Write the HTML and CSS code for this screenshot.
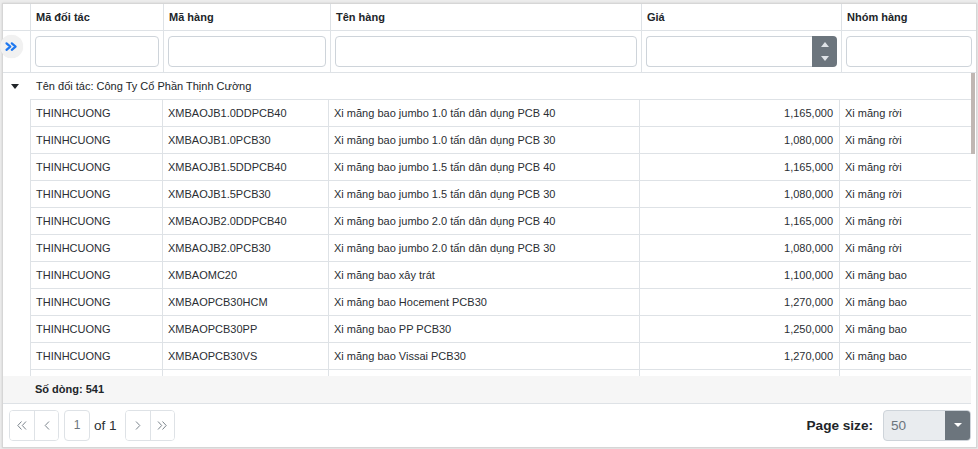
FILE: index.html
```html
<!DOCTYPE html>
<html lang="vi">
<head>
<meta charset="utf-8">
<title>Bảng giá</title>
<link rel="stylesheet" href="styles.css">
</head>
<body>
<div class="grid">
  <div class="head-row">
    <div class="hc"></div>
    <div class="hc">Mã đối tác</div>
    <div class="hc">Mã hàng</div>
    <div class="hc">Tên hàng</div>
    <div class="hc">Giá</div>
    <div class="hc">Nhóm hàng</div>
  </div>
  <div class="filter-row">
    <div class="fc"></div>
    <div class="fc"><input class="finput" type="text"></div>
    <div class="fc"><input class="finput" type="text"></div>
    <div class="fc"><input class="finput" type="text"></div>
    <div class="fc">
      <div class="numbox">
        <input class="finput numinput" type="text">
        <div class="spin"><span class="up"></span><span class="down"></span></div>
      </div>
    </div>
    <div class="fc"><input class="finput" type="text"></div>
  </div>
  <button class="expand" type="button" aria-label="Mở rộng">
    <svg width="23" height="23" viewBox="0 0 23 23"><path d="M6.5 8.3 L10.3 11.6 L6.5 14.9 M11.8 8.3 L15.6 11.6 L11.8 14.9" fill="none" stroke="#1f78f0" stroke-width="2.2" stroke-linecap="round" stroke-linejoin="round"/></svg>
  </button>
  <div class="body-wrap">
    <div class="body-scroll">
      <div class="group-row"><span class="caret"></span>Tên đối tác: Công Ty Cổ Phần Thịnh Cường</div>
      <div class="row"><div class="c0"></div><div class="c">THINHCUONG</div><div class="c">XMBAOJB1.0DDPCB40</div><div class="c">Xi măng bao jumbo 1.0 tấn dân dụng PCB 40</div><div class="c num">1,165,000</div><div class="c">Xi măng rời</div></div>
      <div class="row"><div class="c0"></div><div class="c">THINHCUONG</div><div class="c">XMBAOJB1.0PCB30</div><div class="c">Xi măng bao jumbo 1.0 tấn dân dụng PCB 30</div><div class="c num">1,080,000</div><div class="c">Xi măng rời</div></div>
      <div class="row"><div class="c0"></div><div class="c">THINHCUONG</div><div class="c">XMBAOJB1.5DDPCB40</div><div class="c">Xi măng bao jumbo 1.5 tấn dân dụng PCB 40</div><div class="c num">1,165,000</div><div class="c">Xi măng rời</div></div>
      <div class="row"><div class="c0"></div><div class="c">THINHCUONG</div><div class="c">XMBAOJB1.5PCB30</div><div class="c">Xi măng bao jumbo 1.5 tấn dân dụng PCB 30</div><div class="c num">1,080,000</div><div class="c">Xi măng rời</div></div>
      <div class="row"><div class="c0"></div><div class="c">THINHCUONG</div><div class="c">XMBAOJB2.0DDPCB40</div><div class="c">Xi măng bao jumbo 2.0 tấn dân dụng PCB 40</div><div class="c num">1,165,000</div><div class="c">Xi măng rời</div></div>
      <div class="row"><div class="c0"></div><div class="c">THINHCUONG</div><div class="c">XMBAOJB2.0PCB30</div><div class="c">Xi măng bao jumbo 2.0 tấn dân dụng PCB 30</div><div class="c num">1,080,000</div><div class="c">Xi măng rời</div></div>
      <div class="row"><div class="c0"></div><div class="c">THINHCUONG</div><div class="c">XMBAOMC20</div><div class="c">Xi măng bao xây trát</div><div class="c num">1,100,000</div><div class="c">Xi măng bao</div></div>
      <div class="row"><div class="c0"></div><div class="c">THINHCUONG</div><div class="c">XMBAOPCB30HCM</div><div class="c">Xi măng bao Hocement PCB30</div><div class="c num">1,270,000</div><div class="c">Xi măng bao</div></div>
      <div class="row"><div class="c0"></div><div class="c">THINHCUONG</div><div class="c">XMBAOPCB30PP</div><div class="c">Xi măng bao PP PCB30</div><div class="c num">1,250,000</div><div class="c">Xi măng bao</div></div>
      <div class="row"><div class="c0"></div><div class="c">THINHCUONG</div><div class="c">XMBAOPCB30VS</div><div class="c">Xi măng bao Vissai PCB30</div><div class="c num">1,270,000</div><div class="c">Xi măng bao</div></div>
      <div class="row"><div class="c0"></div><div class="c"></div><div class="c"></div><div class="c"></div><div class="c num"></div><div class="c"></div></div>
    </div>
    <div class="vscroll"><div class="thumb"></div></div>
  </div>
  <div class="footer">Số dòng: 541</div>
  <div class="pager">
    <div class="pager-left">
      <div class="btn-group">
        <button class="pbtn" type="button" aria-label="Trang đầu"><svg width="10" height="9" viewBox="0 0 10 9"><path d="M4.5 0.5 L0.8 4.5 L4.5 8.5 M9 0.5 L5.3 4.5 L9 8.5" fill="none" stroke="#7b848c" stroke-width="1"/></svg></button>
        <button class="pbtn" type="button" aria-label="Trang trước"><svg width="6" height="9" viewBox="0 0 6 9"><path d="M5 0.5 L1.2 4.5 L5 8.5" fill="none" stroke="#7b848c" stroke-width="1"/></svg></button>
      </div>
      <div class="page-input">1</div>
      <span class="of">of 1</span>
      <div class="btn-group">
        <button class="pbtn" type="button" aria-label="Trang sau"><svg width="6" height="9" viewBox="0 0 6 9"><path d="M1 0.5 L4.8 4.5 L1 8.5" fill="none" stroke="#7b848c" stroke-width="1"/></svg></button>
        <button class="pbtn" type="button" aria-label="Trang cuối"><svg width="10" height="9" viewBox="0 0 10 9"><path d="M1 0.5 L4.7 4.5 L1 8.5 M5.5 0.5 L9.2 4.5 L5.5 8.5" fill="none" stroke="#7b848c" stroke-width="1"/></svg></button>
      </div>
    </div>
    <div class="pager-right">
      <span class="ps-label">Page size:</span>
      <div class="select">
        <span class="sel-val">50</span>
        <span class="sel-btn"><span class="tri"></span></span>
      </div>
    </div>
  </div>
</div>
</body>
</html>
```
FILE: styles.css
```css
html, body {
  margin: 0;
  padding: 0;
}
body {
  background: #ececec;
  font-family: "Liberation Sans", Arial, sans-serif;
  color: #212529;
  height: 449px;
  overflow: hidden;
}
.grid {
  position: relative;
  margin: 3px 1px 0 2px;
  height: 445px;
  box-sizing: border-box;
  border: 1px solid #d6d6d6;
  background: #fff;
  display: flex;
  flex-direction: column;
  box-shadow: 0 0 2px rgba(0, 0, 0, 0.12);
}
.head-row,
.filter-row {
  display: grid;
  grid-template-columns: 28px 133px 167px 311px 200px 1fr;
  border-bottom: 1px solid #dee2e6;
  flex: none;
}
.head-row { height: 27px; box-sizing: border-box; }
.filter-row { height: 42px; box-sizing: border-box; }
.hc {
  border-right: 1px solid #dee2e6;
  padding: 0 5px;
  font-size: 11px;
  font-weight: bold;
  line-height: 26px;
  white-space: nowrap;
  overflow: hidden;
}
.hc:last-child, .fc:last-child { border-right: none; }
.fc {
  border-right: 1px solid #dee2e6;
  padding: 5px 4px 0 4px;
}
.finput {
  display: block;
  box-sizing: border-box;
  width: 100%;
  height: 31px;
  border: 1px solid #ced4da;
  border-radius: 4px;
  margin: 0;
  padding: 0 6px;
  background: #fff;
  font: 11px "Liberation Sans", Arial, sans-serif;
  outline: none;
}
.numbox {
  display: flex;
  height: 31px;
}
.numinput {
  flex: 1;
  min-width: 0;
  border-right: none;
  border-radius: 4px 0 0 4px;
}
.spin {
  width: 25px;
  background: #6c757d;
  border-radius: 0 4px 4px 0;
  display: flex;
  flex-direction: column;
  align-items: center;
  justify-content: space-between;
  padding: 6px 0 6px;
  box-sizing: border-box;
}
.spin .up {
  width: 0; height: 0;
  border-left: 4px solid transparent;
  border-right: 4px solid transparent;
  border-bottom: 5px solid #dfe3e7;
}
.spin .down {
  width: 0; height: 0;
  border-left: 4px solid transparent;
  border-right: 4px solid transparent;
  border-top: 5px solid #dfe3e7;
}
.expand {
  position: absolute;
  left: -3px;
  top: 31px;
  width: 23px;
  height: 23px;
  padding: 0;
  border: none;
  border-radius: 50%;
  background: #f1f1f1;
  box-shadow: 0 0 1px rgba(0, 0, 0, 0.08);
  display: flex;
  align-items: center;
  justify-content: center;
}
.expand svg { display: block; }
.body-wrap {
  height: 303px;
  flex: none;
  display: flex;
}
.body-scroll {
  flex: 1;
  min-width: 0;
  overflow: hidden;
}
.vscroll {
  width: 5px;
  flex: none;
}
.thumb {
  width: 4px;
  height: 81px;
  background: #c0b7b3;
}
.group-row {
  height: 26px;
  display: flex;
  align-items: center;
  font-size: 11px;
  color: #212529;
  white-space: nowrap;
}
.caret {
  width: 0; height: 0;
  border-left: 4px solid transparent;
  border-right: 4px solid transparent;
  border-top: 5px solid #212529;
  margin: 0 17px 0 8px;
}
.row {
  display: grid;
  grid-template-columns: 28px 132px 166px 311px 200px 1fr;
  height: 27px;
}
.c0 { border-right: 1px solid #dee2e6; }
.c {
  border-top: 1px solid #dee2e6;
  border-right: 1px solid #dee2e6;
  padding: 0 5px;
  font-size: 11px;
  line-height: 26px;
  white-space: nowrap;
  overflow: hidden;
  color: #2a2e33;
}
.c:last-child { border-right: none; }
.num { text-align: right; padding-right: 6px; }
.footer {
  height: 28px;
  box-sizing: border-box;
  margin-right: 5px;
  background: #f6f6f6;
  border-bottom: 1px solid #dee2e6;
  padding-left: 32px;
  font-size: 11px;
  font-weight: bold;
  line-height: 27px;
  flex: none;
}
.pager {
  flex: 1;
  display: flex;
  align-items: center;
  justify-content: space-between;
  padding: 0 5px 1px 6px;
}
.pager-left,
.pager-right {
  display: flex;
  align-items: center;
}
.btn-group {
  display: flex;
  border: 1px solid #dee2e6;
  border-radius: 4px;
  height: 31px;
  box-sizing: border-box;
  overflow: hidden;
}
.pbtn {
  width: 24px;
  height: 100%;
  padding: 0;
  margin: 0;
  border: none;
  background: #fff;
  display: flex;
  align-items: center;
  justify-content: center;
}
.pbtn + .pbtn { border-left: 1px solid #dee2e6; width: 24px; }
.page-input {
  margin-left: 5px;
  width: 26px;
  height: 31px;
  box-sizing: border-box;
  border: 1px solid #dee2e6;
  border-radius: 4px;
  font-size: 12px;
  color: #6c757d;
  text-align: center;
  line-height: 29px;
}
.of {
  font-size: 13.6px;
  margin: 0 8px 0 4px;
  color: #2b2f33;
}
.ps-label {
  font-size: 13.6px;
  font-weight: bold;
  margin-right: 10px;
}
.select {
  width: 88px;
  height: 31px;
  box-sizing: border-box;
  border: 1px solid #ced4da;
  border-radius: 4px;
  background: #e9ecef;
  display: flex;
  overflow: hidden;
}
.sel-val {
  flex: 1;
  padding-left: 7px;
  font-size: 13.6px;
  color: #6c757d;
  line-height: 29px;
}
.sel-btn {
  width: 25px;
  background: #6c757d;
  display: flex;
  align-items: center;
  justify-content: center;
}
.tri {
  width: 0; height: 0;
  border-left: 4px solid transparent;
  border-right: 4px solid transparent;
  border-top: 4px solid #fff;
}
```
